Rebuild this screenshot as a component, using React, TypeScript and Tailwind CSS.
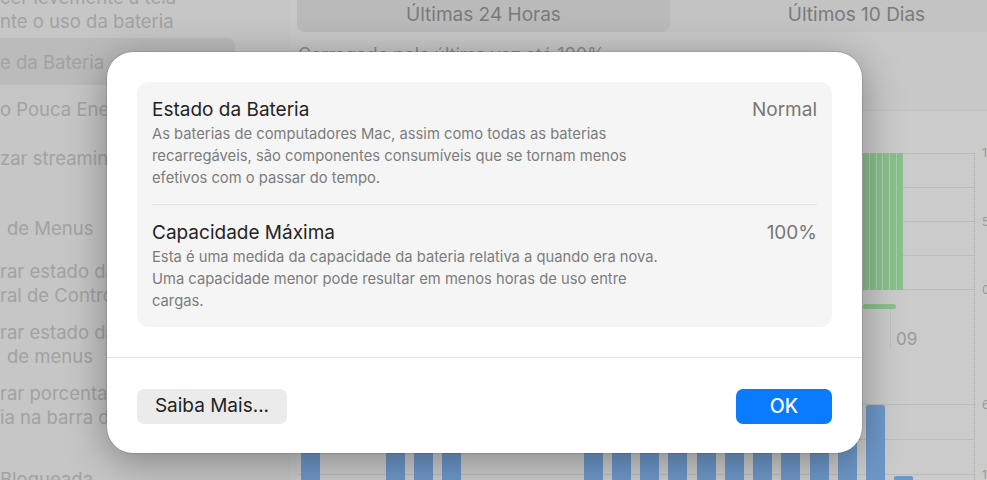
import React from 'react';

const font = { fontFamily: 'Inter, "Noto Sans", sans-serif' };

const SidebarLine: React.FC<{ text: string; indent?: boolean }> = ({ text, indent }) => (
  <span className={`block whitespace-nowrap leading-[24px] ${indent ? 'pl-[7px]' : ''}`}>{text}</span>
);

// heights of the lower chart bars, 24 slots, 0 = empty
const lowerBars = [80, 0, 0, 75, 80, 70, 0, 0, 0, 0, 85, 80, 78, 82, 80, 78, 84, 76, 80, 82, 104, 33, 0, 0];

const Sidebar: React.FC = () => (
  <div className="w-[290px] shrink-0 bg-[#c6c6c6] text-[18.5px] text-[#a2a2a2] flex flex-col">
    <div className="shrink-0 mt-[-15px] h-[53px]">
      <SidebarLine text="cer levemente a tela" />
      <SidebarLine text="nte o uso da bateria" />
    </div>
    <div className="shrink-0 h-[47px] w-[235px] bg-[#bbbbbb] rounded-r-lg flex items-center">
      <span className="whitespace-nowrap mt-[3px]">e da Bateria</span>
    </div>
    <div className="shrink-0 h-[50px] flex items-center">
      <span className="whitespace-nowrap">o Pouca Energia</span>
    </div>
    <div className="shrink-0 h-[48px] flex items-center">
      <span className="whitespace-nowrap">zar streaming</span>
    </div>
    <div className="shrink-0 h-[65px] flex items-end pb-[5px]">
      <span className="whitespace-nowrap pl-[7px]">de Menus</span>
    </div>
    <div className="shrink-0 pt-[11px]">
      <SidebarLine text="rar estado da bateria" />
      <SidebarLine text="ral de Controle" />
    </div>
    <div className="shrink-0 pt-[13px]">
      <SidebarLine text="rar estado da bateria" />
      <SidebarLine text="de menus" indent />
    </div>
    <div className="shrink-0 pt-[13px]">
      <SidebarLine text="rar porcentagem" />
      <SidebarLine text="ia na barra de menus" />
    </div>
    <div className="shrink-0 pt-[38px]">
      <SidebarLine text="Bloqueada" />
    </div>
  </div>
);

const Main: React.FC = () => (
  <div className="flex-1 min-w-0 bg-[#c8c8c8] flex flex-col">
    {/* segmented control */}
    <div className="shrink-0 mt-[-10px] ml-[7px] h-[42px] w-[760px] bg-[#c3c3c3] rounded-lg flex text-[19px] text-[#7a7a7a]">
      <div className="w-[373px] h-full bg-[#bababa] rounded-lg flex items-end justify-center pb-[3px]">Últimas 24 Horas</div>
      <div className="w-[373px] h-full flex items-end justify-center pb-[3px]">Últimos 10 Dias</div>
    </div>
    <div className="shrink-0 mt-[12px] ml-[8px] text-[18px] leading-[22px] text-[#8c8c8c] whitespace-nowrap">
      Carregado pela última vez até 100%
    </div>
    {/* chart box */}
    <div className="shrink-0 mt-[44px] ml-[7px] h-[420px] bg-[#cbcbcb] border-t border-[#c1c1c1] rounded-tl-lg pt-[42px] flex">
      <div className="w-[678px] shrink-0 flex flex-col border-r border-dotted border-[#aaaaaa]">
        {/* upper chart */}
        <div className="grid shrink-0">
          <div className="col-start-1 row-start-1 flex flex-col">
            <div className="h-[34px] border-t border-[#bcbcbc]" />
            <div className="h-[34px] border-t border-[#bcbcbc]" />
            <div className="h-[34px] border-t border-[#bcbcbc]" />
            <div className="h-[35px] border-t border-b border-[#bcbcbc]" />
          </div>
          <div className="col-start-1 row-start-1 flex pl-[566px]">
            <div className="w-[40px] h-[137px] bg-[#a6d2a8] flex gap-px">
              <div className="flex-1 bg-[#8bbf8d]" />
              <div className="flex-1 bg-[#8bbf8d]" />
              <div className="flex-1 bg-[#8bbf8d]" />
              <div className="flex-1 bg-[#8bbf8d]" />
              <div className="flex-1 bg-[#8bbf8d]" />
              <div className="flex-1 bg-[#8bbf8d]" />
            </div>
          </div>
        </div>
        <div className="shrink-0 mt-[14px] ml-[566px] w-[33px] h-[5px] rounded-sm bg-[#8cbf8e]" />
        {/* x axis */}
        <div className="shrink-0 h-[40px] flex">
          <div className="ml-[593px] w-px h-full bg-[#bdbdbd]" />
          <span className="ml-[5px] mt-[19px] text-[17px] leading-[22px] text-[#9a9a9a]">09</span>
        </div>
        {/* lower chart */}
        <div className="shrink-0 mt-[55px] grid">
          <div className="col-start-1 row-start-1 flex flex-col">
            <div className="h-[35px] border-t border-[#bcbcbc]" />
            <div className="h-[35px] border-t border-[#bcbcbc]" />
            <div className="h-[35px] border-t border-[#bcbcbc]" />
          </div>
          <div className="col-start-1 row-start-1 flex items-end h-[105px]">
            {lowerBars.map((h, i) => (
              <div key={i} className="w-[28.25px] shrink-0 flex items-end pl-[4px]">
                {h > 0 && <div className="w-[19px] bg-[#6d97c9] rounded-t-[2px]" style={{ height: h }} />}
              </div>
            ))}
          </div>
        </div>
      </div>
      <div className="flex-1 pl-[7px] text-[12px] text-[#9a9a9a] flex flex-col">
        <span className="mt-[-8px] leading-[16px]">100%</span>
        <span className="mt-[53px] leading-[16px]">50%</span>
        <span className="mt-[52px] leading-[16px]">0%</span>
        <span className="mt-[99px] leading-[16px]">60</span>
        <span className="mt-[54px] leading-[16px]">10</span>
      </div>
    </div>
  </div>
);

const Section: React.FC<{ title: string; value: string; lines: string[] }> = ({ title, value, lines }) => (
  <div>
    <div className="flex justify-between items-baseline">
      <span className="text-[19px] leading-[22px] text-[#242424]">{title}</span>
      <span className="text-[19px] leading-[22px] text-[#777777]">{value}</span>
    </div>
    <div className="mt-[2px] text-[14.75px] leading-[22px] text-[#7c7c7c]">
      {lines.map((l) => (
        <span key={l} className="block whitespace-nowrap">{l}</span>
      ))}
    </div>
  </div>
);

const Dialog: React.FC = () => (
  <div className="absolute left-[107px] top-[52px] w-[755px] h-[401px] bg-white rounded-[26px] shadow-[0_8px_40px_rgba(0,0,0,0.35)] ring-1 ring-black/10 flex flex-col">
    <div className="px-[30px] pt-[30px]">
      <div className="bg-[#f5f5f5] rounded-[12px] px-[15px] pt-[17px] pb-[15px]">
        <Section
          title="Estado da Bateria"
          value="Normal"
          lines={[
            'As baterias de computadores Mac, assim como todas as baterias',
            'recarregáveis, são componentes consumíveis que se tornam menos',
            'efetivos com o passar do tempo.',
          ]}
        />
        <div className="mt-[15px] mb-[17px] h-px bg-[#e4e4e4]" />
        <Section
          title="Capacidade Máxima"
          value="100%"
          lines={[
            'Esta é uma medida da capacidade da bateria relativa a quando era nova.',
            'Uma capacidade menor pode resultar em menos horas de uso entre',
            'cargas.',
          ]}
        />
      </div>
    </div>
    <div className="mt-[30px] h-px bg-[#e3e3e3]" />
    <div className="px-[30px] pt-[31px] flex justify-between">
      <button className="w-[150px] h-[35px] rounded-[7px] bg-[#ebebeb] text-[19px] text-[#222222]">Saiba Mais...</button>
      <button className="w-[96px] h-[35px] rounded-[7px] bg-[#0a7aff] text-[19.5px] font-medium text-white">OK</button>
    </div>
  </div>
);

export default function App() {
  return (
    <div className="relative w-[987px] h-[480px] overflow-hidden flex" style={font}>
      <Sidebar />
      <Main />
      <Dialog />
    </div>
  );
}
